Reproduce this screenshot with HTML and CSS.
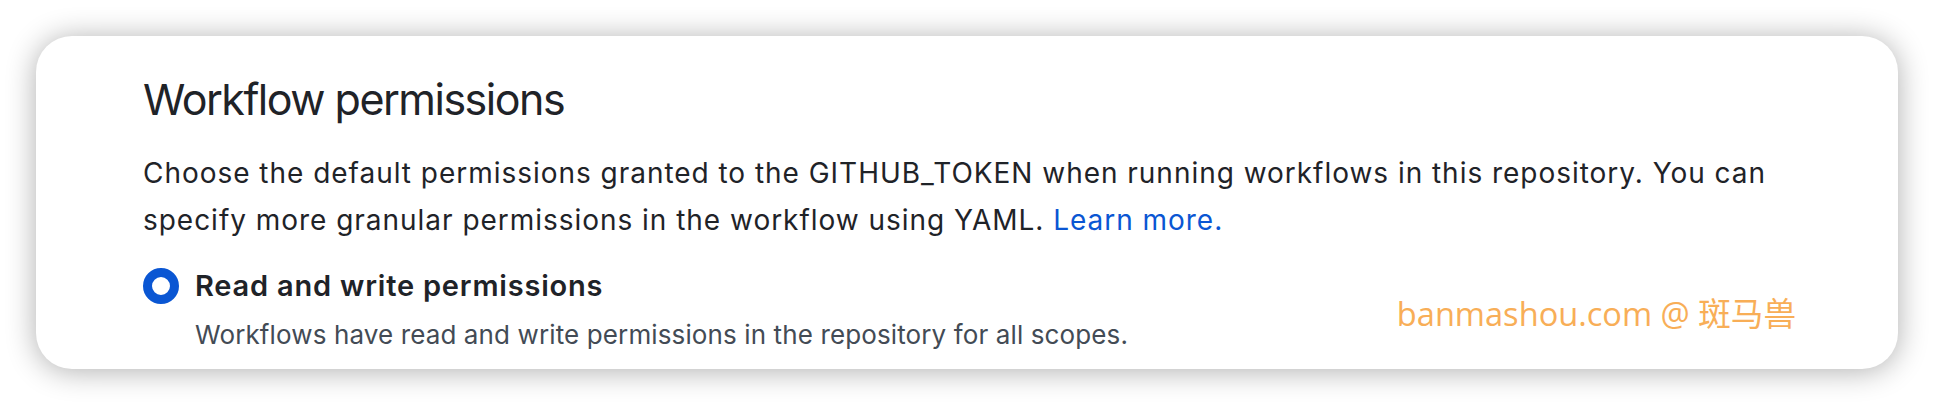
FILE: index.html
```html
<!DOCTYPE html>
<html lang="en">
<head>
    <meta charset="UTF-8">
    <title>Workflow permissions</title>
    <link rel="stylesheet" href="styles.css">
</head>
<body>
<div class="card">
    <h2 class="title">Workflow permissions</h2>
    <p class="intro">
        Choose the default permissions granted to the GITHUB_TOKEN when running workflows in this repository. You can<br>
        specify more granular permissions in the workflow using YAML. <a href="#" class="link">Learn more.</a>
    </p>
    <div class="option">
        <span class="radio"></span>
        <span class="option-label">Read and write permissions</span>
    </div>
    <p class="option-note">Workflows have read and write permissions in the repository for all scopes.</p>

    <div class="watermark">banmashou.com @ 斑马兽</div>
</div>
</body>
</html>
```

FILE: styles.css
```css
html, body {
    margin: 0;
    background: #ffffff;
}

body {
    padding: 36px;
    font-family: Inter, "Noto Sans", sans-serif;
    color: #1f2328;
}

.card {
    position: relative;
    height: 333px;
    box-sizing: border-box;
    padding: 37px 107px 0;
    background: #ffffff;
    border-radius: 36px;
    box-shadow: 0 2px 30px rgba(0, 0, 0, 0.32);
}

.title {
    margin: 0;
    font-size: 43px;
    line-height: 52px;
    font-weight: 400;
    letter-spacing: -1.5px;
}

.intro {
    margin: 25px 0 0;
    font-size: 28px;
    line-height: 47px;
    letter-spacing: 0.97px;
}

.link {
    color: #0a56d3;
    text-decoration: none;
}

.option {
    display: flex;
    align-items: center;
    gap: 16px;
    margin-top: 24px;
    height: 36px;
}

.radio {
    width: 36px;
    height: 36px;
    box-sizing: border-box;
    border: 9px solid #0a56d3;
    border-radius: 50%;
}

.option-label {
    font-size: 29px;
    line-height: 36px;
    font-weight: 600;
    letter-spacing: 0.8px;
}

.option-note {
    margin: 13px 0 0 52px;
    font-size: 26px;
    line-height: 36px;
    letter-spacing: 0.12px;
    color: #434b55;
}

.watermark {
    position: absolute;
    right: 102px;
    top: 256px;
    font-family: "Open Sans", "Noto Sans CJK SC", sans-serif;
    font-size: 32.6px;
    line-height: 44px;
    color: #f8ae57;
}
```
